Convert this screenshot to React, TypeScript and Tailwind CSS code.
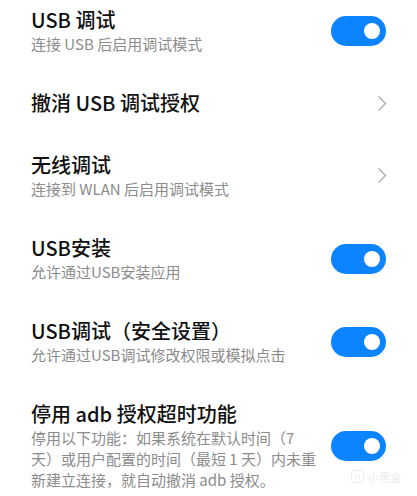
const font = "font-['Noto_Sans_CJK_SC','Noto_Sans',sans-serif]";

function Toggle() {
  return (
    <div className="flex h-[30px] w-[55px] shrink-0 items-center justify-end rounded-full bg-[#0d84ff] pr-[6px]">
      <div className="h-[16px] w-[16px] rounded-full bg-white" />
    </div>
  );
}

function Chevron() {
  return (
    <svg width="10" height="17" viewBox="0 0 10 17" className="mr-[-1px] shrink-0">
      <path d="M1.5 1.5 L8.5 8.5 L1.5 15.5" fill="none" stroke="#b5b5b5" strokeWidth="1.5" />
    </svg>
  );
}

interface RowProps {
  title: string;
  desc?: string[];
  action: 'toggle' | 'chevron';
}

function Row({ title, desc, action }: RowProps) {
  return (
    <div className="flex items-center justify-between gap-2">
      <div className="flex min-w-0 flex-1 flex-col">
        <p className="text-[20px] font-medium leading-[26px] text-[#111]">{title}</p>
        {desc && (
          <p className="text-[15px] leading-[21px] text-[#8c8c8c]">
            {desc.map((line, i) => (
              <span key={i} className="block whitespace-nowrap">{line}</span>
            ))}
          </p>
        )}
      </div>
      {action === 'toggle' ? <Toggle /> : <Chevron />}
    </div>
  );
}

const rows: RowProps[] = [
  { title: 'USB 调试', desc: ['连接 USB 后启用调试模式'], action: 'toggle' },
  { title: '撤消 USB 调试授权', action: 'chevron' },
  { title: '无线调试', desc: ['连接到 WLAN 后启用调试模式'], action: 'chevron' },
  { title: 'USB安装', desc: ['允许通过USB安装应用'], action: 'toggle' },
  { title: 'USB调试（安全设置）', desc: ['允许通过USB调试修改权限或模拟点击'], action: 'toggle' },
  {
    title: '停用 adb 授权超时功能',
    desc: [
      '停用以下功能：如果系统在默认时间（7',
      '天）或用户配置的时间（最短 1 天）内未重',
      '新建立连接，就自动撤消 adb 授权。',
    ],
    action: 'toggle',
  },
];

export default function App() {
  return (
    <div className={`relative h-[496px] w-[417px] overflow-hidden bg-white ${font}`}>
      <div className="flex flex-col gap-[36px] px-[31px] pt-[7px]">
        {rows.map((row, i) => (
          <Row key={i} {...row} />
        ))}
      </div>
      {/* faint watermark */}
      <div className="absolute bottom-[11px] right-[16px] flex items-center gap-1 text-[11px] text-[#ececec]">
        <span className="flex h-[13px] w-[13px] items-center justify-center rounded-[3px] border border-[#ececec] text-[8px]">H</span>
        <span>小黑盒</span>
      </div>
    </div>
  );
}
